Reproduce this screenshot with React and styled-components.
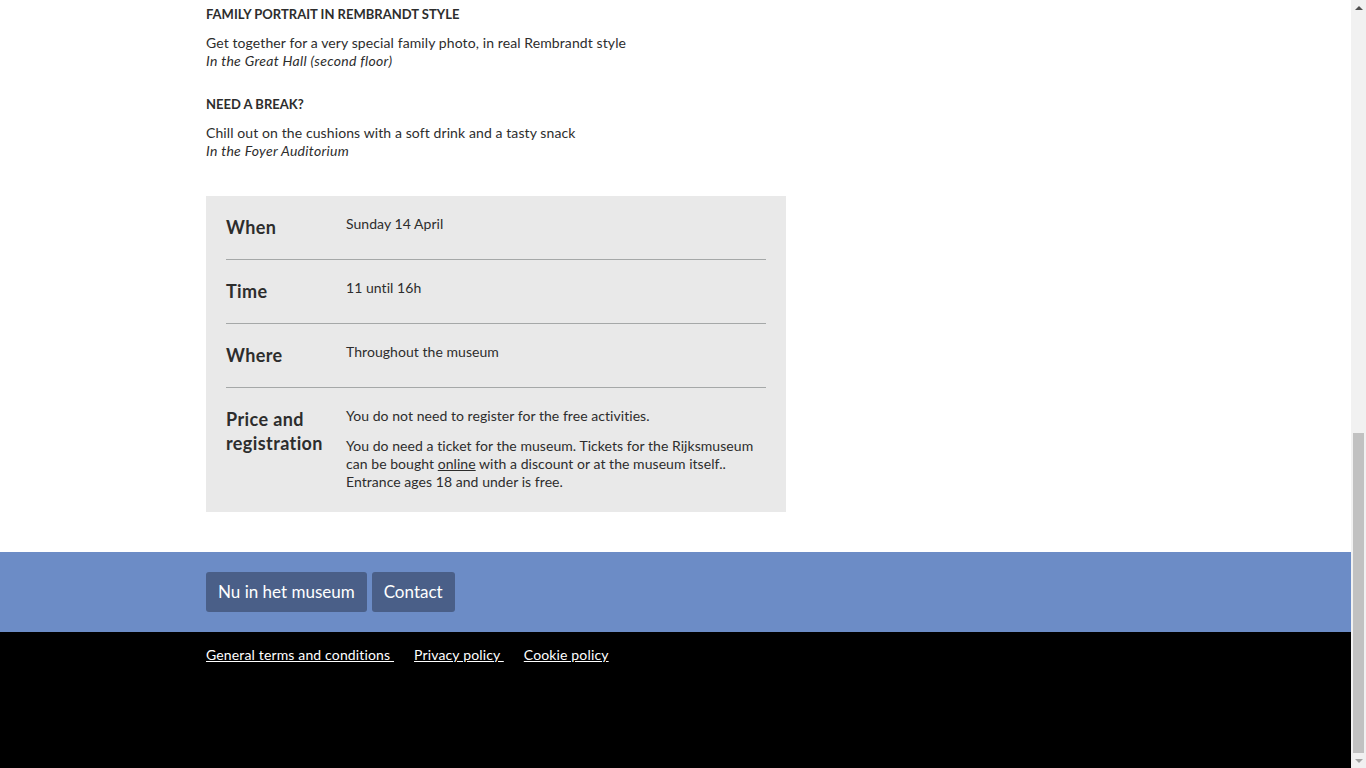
import styled, { createGlobalStyle } from "styled-components";

const GlobalStyle = createGlobalStyle`
  html, body {
    margin: 0;
    padding: 0;
    background: #fff;
    overflow: hidden;
  }
  body {
    font-family: Lato, "Open Sans", sans-serif;
    font-size: 14px;
    color: #2d2d2d;
    font-variant-ligatures: none;
  }
  * { box-sizing: border-box; }
`;

const program = [
  { title: "Family portrait in Rembrandt style", text: "Get together for a very special family photo, in real Rembrandt style", where: "In the Great Hall (second floor)" },
  { title: "Need a break?", text: "Chill out on the cushions with a soft drink and a tasty snack", where: "In the Foyer Auditorium" },
];

const Page = styled.div`
  display: flex;
  flex-direction: column;
  height: 768px;
  padding-right: 15px;
`;

const Wrap = styled.div`
  width: 939px;
  margin: 0 auto;
`;

const Program = styled.div`
  width: 580px;
  display: flex;
  flex-direction: column;
  gap: 25px;
  padding-top: 5px;
  margin-bottom: 36px;
`;

const Item = styled.div``;

const ItemTitle = styled.h3`
  margin: 0 0 11px;
  font-size: 13px;
  line-height: 18px;
  font-weight: 700;
  text-transform: uppercase;
`;

const ItemText = styled.p`
  margin: 0;
  font-size: 14px;
  line-height: 18px;
  letter-spacing: 0.1px;
  em {
    display: block;
    letter-spacing: 0.3px;
  }
`;

const Facts = styled.div`
  width: 580px;
  background: #e9e9e9;
  padding: 0 20px;
  margin-bottom: 40px;
`;

const FactRow = styled.div`
  display: grid;
  grid-template-columns: 120px 1fr;
  padding: 19px 0 20px;
  border-bottom: 1px solid #a5a8a8;
  &:last-child {
    border-bottom: none;
    padding-bottom: 21px;
  }
`;

const FactLabel = styled.div`
  font-size: 18px;
  line-height: 24px;
  font-weight: 700;
  letter-spacing: 0.4px;
`;

const FactValue = styled.div`
  font-size: 14px;
  line-height: 18px;
  letter-spacing: 0.05px;
  p { margin: 0 0 12px; }
  p:last-child { margin-bottom: 0; }
  a { color: inherit; }
`;

const NavBand = styled.div`
  background: #6c8cc6;
  padding: 20px 0;
`;

const NavList = styled.div`
  display: flex;
  gap: 5px;
`;

const NavButton = styled.a`
  display: block;
  background: #4a5f88;
  color: #fff;
  font-size: 17px;
  line-height: 40px;
  padding: 0 12px;
  border-radius: 3px;
  text-decoration: none;
`;

const Bottom = styled.div`
  background: #000;
  flex: 1;
  padding-top: 14px;
`;

const Links = styled.div`
  display: flex;
  gap: 20px;
`;

const FootLink = styled.a`
  color: #fff;
  font-size: 14px;
  line-height: 18px;
  letter-spacing: 0.15px;
  text-decoration: underline;
  white-space: pre;
`;

/* browser scrollbar, scrolled to the bottom */
const Scrollbar = styled.div`
  position: fixed;
  top: 0;
  right: 0;
  width: 15px;
  height: 100vh;
  background: #f1f1f1;
  display: flex;
  flex-direction: column;
`;

const ScrollArrow = styled.div`
  height: 15px;
  display: flex;
  align-items: center;
  justify-content: center;
  color: ${(p) => (p.$disabled ? "#a3a3a3" : "#505050")};
`;

const Track = styled.div`
  flex: 1;
  display: flex;
  flex-direction: column;
  justify-content: flex-end;
  padding: 0 2px;
`;

const Thumb = styled.div`
  height: 320px;
  background: #c1c1c1;
`;

export default function App() {
  return (
    <Page>
      <GlobalStyle />
      <Wrap>
        <Program>
          {program.map((it) => (
            <Item key={it.title}>
              <ItemTitle>{it.title}</ItemTitle>
              <ItemText>
                {it.text}
                <em>{it.where}</em>
              </ItemText>
            </Item>
          ))}
        </Program>
        <Facts>
          <FactRow>
            <FactLabel>When</FactLabel>
            <FactValue>Sunday 14 April</FactValue>
          </FactRow>
          <FactRow>
            <FactLabel>Time</FactLabel>
            <FactValue>11 until 16h</FactValue>
          </FactRow>
          <FactRow>
            <FactLabel>Where</FactLabel>
            <FactValue>Throughout the museum</FactValue>
          </FactRow>
          <FactRow>
            <FactLabel>Price and registration</FactLabel>
            <FactValue>
              <p>You do not need to register for the free activities.</p>
              <p>
                You do need a ticket for the museum. Tickets for the Rijksmuseum
                can be bought <a href="#">online</a> with a discount or at the
                museum itself.. Entrance ages 18 and under is free.
              </p>
            </FactValue>
          </FactRow>
        </Facts>
      </Wrap>
      <NavBand>
        <Wrap>
          <NavList>
            <NavButton href="#">Nu in het museum</NavButton>
            <NavButton href="#">Contact</NavButton>
          </NavList>
        </Wrap>
      </NavBand>
      <Bottom>
        <Wrap>
          <Links>
            <FootLink href="#">General terms and conditions </FootLink>
            <FootLink href="#">Privacy policy </FootLink>
            <FootLink href="#">Cookie policy</FootLink>
          </Links>
        </Wrap>
      </Bottom>
      <Scrollbar>
        <ScrollArrow>
          <svg width="8" height="4" viewBox="0 0 8 4">
            <path d="M0 4 L4 0 L8 4 Z" fill="currentColor" />
          </svg>
        </ScrollArrow>
        <Track>
          <Thumb />
        </Track>
        <ScrollArrow $disabled>
          <svg width="8" height="4" viewBox="0 0 8 4">
            <path d="M0 0 L8 0 L4 4 Z" fill="currentColor" />
          </svg>
        </ScrollArrow>
      </Scrollbar>
    </Page>
  );
}
